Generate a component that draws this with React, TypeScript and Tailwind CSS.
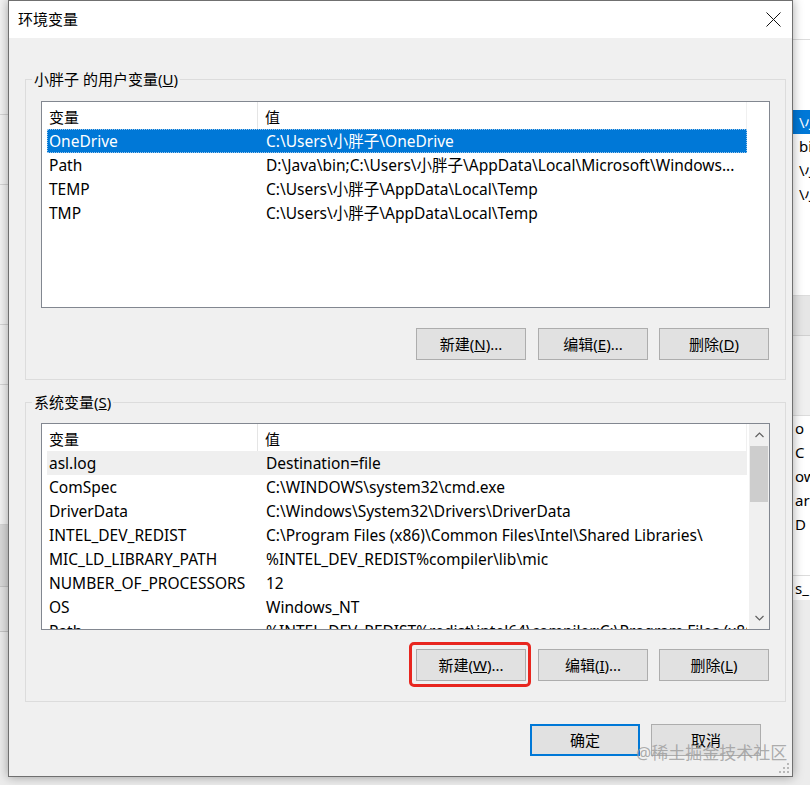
import React from "react";

type Row = [string, string];

const userRows: Row[] = [
  ["OneDrive", "C:\\Users\\小胖子\\OneDrive"],
  ["Path", "D:\\Java\\bin;C:\\Users\\小胖子\\AppData\\Local\\Microsoft\\Windows..."],
  ["TEMP", "C:\\Users\\小胖子\\AppData\\Local\\Temp"],
  ["TMP", "C:\\Users\\小胖子\\AppData\\Local\\Temp"],
];

const sysRows: Row[] = [
  ["asl.log", "Destination=file"],
  ["ComSpec", "C:\\WINDOWS\\system32\\cmd.exe"],
  ["DriverData", "C:\\Windows\\System32\\Drivers\\DriverData"],
  ["INTEL_DEV_REDIST", "C:\\Program Files (x86)\\Common Files\\Intel\\Shared Libraries\\"],
  ["MIC_LD_LIBRARY_PATH", "%INTEL_DEV_REDIST%compiler\\lib\\mic"],
  ["NUMBER_OF_PROCESSORS", "12"],
  ["OS", "Windows_NT"],
  ["Path", "%INTEL_DEV_REDIST%redist\\intel64\\compiler;C:\\Program Files (x86)\\..."],
];

function Btn({ children, primary }: { children: React.ReactNode; primary?: boolean }) {
  return (
    <button
      className={
        "w-[110px] h-[32px] bg-[#e1e1e1] text-[15px] leading-[20px] text-black " +
        (primary ? "border-2 border-[#0078d7]" : "border border-[#adadad]")
      }
    >
      {children}
    </button>
  );
}

function ListBox({ rows, selected, hover, scroll }: { rows: Row[]; selected?: number; hover?: number; scroll?: boolean }) {
  return (
    <div className="h-[207px] border border-[#828790] bg-white flex overflow-hidden">
      <div className="flex-1 flex flex-col overflow-hidden">
        {/* header */}
        <div className="h-[27px] shrink-0 ml-[5px] w-[700px] flex text-[15px] leading-[24px]">
          <div className="w-[211px] pl-[2px] pt-[3px] border-r border-[#e5e5e5]">变量</div>
          <div className="flex-1 pl-[7px] pt-[3px] border-r border-[#f0f0f0]">值</div>
        </div>
        {rows.map((r, i) => (
          <div
            key={i}
            className={
              "h-[24px] shrink-0 ml-[5px] w-[700px] flex text-[15.5px] leading-[24px] whitespace-nowrap " +
              (i === selected
                ? "bg-[#0078d7] text-white outline outline-1 outline-dotted outline-[#9cc7ec] -outline-offset-1"
                : i === hover
                ? "bg-[#efefef] text-black"
                : "text-black")
            }
          >
            <div className="w-[212px] pl-[2px] overflow-hidden">{r[0]}</div>
            <div className="flex-1 pl-[7px] overflow-hidden">{r[1]}</div>
          </div>
        ))}
      </div>
      {scroll && (
        <div className="w-[20px] bg-[#f0f0f0] flex flex-col">
          <div className="h-[22px] flex items-center justify-center">
            <svg width="9" height="6" viewBox="0 0 9 6">
              <path d="M0.5 5 L4.5 1 L8.5 5" fill="none" stroke="#606060" strokeWidth="1.2" />
            </svg>
          </div>
          <div className="h-[56px] mx-[1px] bg-[#cdcdcd]" />
          <div className="flex-1" />
          <div className="h-[22px] flex items-center justify-center">
            <svg width="9" height="6" viewBox="0 0 9 6">
              <path d="M0.5 1 L4.5 5 L8.5 1" fill="none" stroke="#606060" strokeWidth="1.2" />
            </svg>
          </div>
        </div>
      )}
    </div>
  );
}

export default function App() {
  return (
    <div className="w-[810px] h-[785px] overflow-hidden flex bg-[#ececec] font-['Noto_Sans','Noto_Sans_CJK_SC',sans-serif] text-black">
      {/* left background window */}
      <div className="w-[8px] shrink-0 flex flex-col bg-[#f3f3f3]">
        <div className="h-[115px] border-b border-[#d4d4d4]" />
        <div className="h-[70px] border-b border-[#d4d4d4]" />
        <div className="h-[140px] border-b border-[#d4d4d4]" />
        <div className="h-[60px] border-b border-[#d4d4d4]" />
        <div className="h-[140px] border-b border-[#d4d4d4]" />
        <div className="h-[62px] bg-[#d9d9d9] border-b border-[#c4c4c4]" />
        <div className="h-[45px] bg-[#e4e4e4] border-b border-[#c4c4c4]" />
        <div className="flex-1 bg-[#ececec]" />
      </div>

      {/* dialog */}
      <div className="w-[785px] h-[777px] shrink-0 border border-[#707070] bg-[#f0f0f0] flex flex-col shadow-[0_0_10px_rgba(0,0,0,0.35)] relative z-10">
        <div className="h-[37px] bg-white flex items-center justify-between pl-[9px] pr-[4px]">
          <span className="text-[15px] leading-[20px] -mt-[2px]">环境变量</span>
          <div className="w-[30px] flex items-center justify-center">
            <svg width="15" height="15" viewBox="0 0 15 15">
              <path d="M0.5 0.5 L14.5 14.5 M14.5 0.5 L0.5 14.5" stroke="#111" strokeWidth="1" />
            </svg>
          </div>
        </div>

        <div className="flex-1 flex flex-col pt-[31px]">
          <fieldset className="ml-[16px] w-[761px] border border-[#dcdcdc] px-[15px] pt-[12px] pb-[19px]">
            <legend className="-ml-[9px] px-[2px] text-[15px] leading-[20px]">
              小胖子 的用户变量(<u>U</u>)
            </legend>
            <ListBox rows={userRows} selected={0} />
            <div className="mt-[20px] mr-[1px] flex justify-end">
              <Btn>新建(<u>N</u>)...</Btn>
              <div className="w-[12px]" />
              <Btn>编辑(<u>E</u>)...</Btn>
              <div className="w-[11px]" />
              <Btn>删除(<u>D</u>)</Btn>
            </div>
          </fieldset>

          <fieldset className="mt-[12px] ml-[16px] w-[761px] border border-[#dcdcdc] px-[15px] pt-[11px] pb-[20px]">
            <legend className="-ml-[9px] px-[2px] text-[15px] leading-[20px]">
              系统变量(<u>S</u>)
            </legend>
            <ListBox rows={sysRows} hover={0} scroll />
            <div className="mt-[19px] mr-[1px] flex justify-end">
              <div className="relative">
                <Btn>新建(<u>W</u>)...</Btn>
                <span className="absolute -left-[7px] -right-[5px] -top-[7px] -bottom-[6px] border-[3px] border-[#e8261f] rounded-[5px] pointer-events-none" />
              </div>
              <div className="w-[12px]" />
              <Btn>编辑(<u>I</u>)...</Btn>
              <div className="w-[11px]" />
              <Btn>删除(<u>L</u>)</Btn>
            </div>
          </fieldset>

          <div className="mt-[22px] mr-[31px] flex justify-end gap-[11px]">
            <Btn primary>确定</Btn>
            <Btn>取消</Btn>
          </div>
        </div>

        {/* watermark */}
        <span className="absolute left-[627px] top-[741px] text-[17px] leading-[22px] text-[#9a9a9a]/80 whitespace-nowrap">
          @稀土掘金技术社区
        </span>
        {/* resize grip */}
        <svg className="absolute right-[2px] bottom-[2px]" width="11" height="11" viewBox="0 0 11 11">
          <g fill="#b8b8b8">
            <rect x="8" y="0" width="2" height="2" />
            <rect x="4" y="4" width="2" height="2" />
            <rect x="8" y="4" width="2" height="2" />
            <rect x="0" y="8" width="2" height="2" />
            <rect x="4" y="8" width="2" height="2" />
            <rect x="8" y="8" width="2" height="2" />
          </g>
        </svg>
      </div>

      {/* right background window */}
      <div className="flex-1 flex flex-col bg-[#f7f7f7] text-[15px] leading-[24px] whitespace-nowrap overflow-hidden">
        <div className="h-[40px] bg-white border-b border-[#dcdcdc]" />
        <div className="h-[70px] bg-white" />
        <div className="h-[24px] bg-[#0078d7] text-white pl-[6px]">\小</div>
        <div className="h-[24px] bg-white pl-[6px]">bin</div>
        <div className="h-[24px] bg-white pl-[6px]">\小</div>
        <div className="h-[24px] bg-white pl-[6px]">\小</div>
        <div className="h-[90px] bg-white border-b border-[#dcdcdc]" />
        <div className="h-[40px] bg-[#e6e6e6] border-b border-[#d0d0d0]" />
        <div className="h-[80px] bg-[#f0f0f0] border-b border-[#dcdcdc]" />
        <div className="h-[24px] bg-white pl-[2px]">o</div>
        <div className="h-[24px] bg-white pl-[2px]">C</div>
        <div className="h-[24px] bg-white pl-[2px]">ow</div>
        <div className="h-[24px] bg-white pl-[2px]">ar</div>
        <div className="h-[24px] bg-white pl-[2px]">D</div>
        <div className="h-[40px] bg-white border-b border-[#dcdcdc]" />
        <div className="h-[24px] bg-white pl-[2px]">s_</div>
        <div className="flex-1 bg-[#ececec]" />
      </div>
    </div>
  );
}
